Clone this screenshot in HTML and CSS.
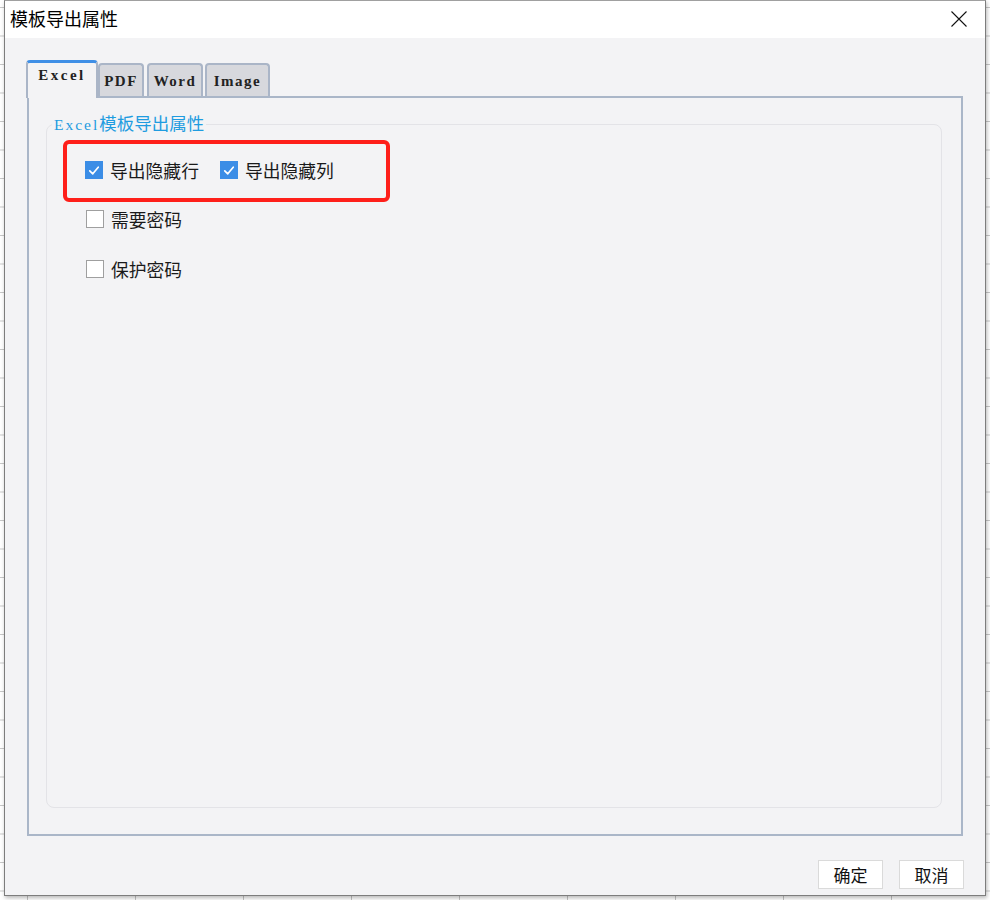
FILE: index.html
```html
<!DOCTYPE html>
<html lang="zh-CN">
<head>
<meta charset="utf-8">
<title>模板导出属性</title>
<link rel="stylesheet" href="styles.css">
</head>
<body>
<div class="dialog">
  <div class="titlebar">
    <span class="title">模板导出属性</span>
    <span class="close">
      <svg width="16" height="16" viewBox="0 0 16 16"><path d="M0.5 0.5 L15.5 15.5 M15.5 0.5 L0.5 15.5" stroke="#111" stroke-width="1.1" fill="none"/></svg>
    </span>
  </div>
  <div class="body">
    <div class="tabs">
      <div class="tab tab-excel active">Excel</div>
      <div class="tab tab-pdf">PDF</div>
      <div class="tab tab-word">Word</div>
      <div class="tab tab-image">Image</div>
    </div>
    <div class="panel">
      <fieldset class="group">
        <legend class="legend"><span class="latin">Excel</span>模板导出属性</legend>
        <div class="highlight">
          <label class="check"><span class="box checked"><svg width="17" height="17" viewBox="0 0 17 17"><path d="M4 8.8 L7.2 12 L13 5" stroke="#fff" stroke-width="1.8" fill="none" stroke-linecap="round" stroke-linejoin="round"/></svg></span>导出隐藏行</label>
          <label class="check"><span class="box checked"><svg width="17" height="17" viewBox="0 0 17 17"><path d="M4 8.8 L7.2 12 L13 5" stroke="#fff" stroke-width="1.8" fill="none" stroke-linecap="round" stroke-linejoin="round"/></svg></span>导出隐藏列</label>
        </div>
        <div class="row row-2"><label class="check"><span class="box"></span>需要密码</label></div>
        <div class="row row-3"><label class="check"><span class="box"></span>保护密码</label></div>
      </fieldset>
    </div>
    <div class="buttons">
      <button class="btn">确定</button>
      <button class="btn">取消</button>
    </div>
  </div>
</div>
</body>
</html>
```
FILE: styles.css
```css
html, body {
  margin: 0;
  padding: 0;
}
body {
  width: 990px;
  height: 900px;
  overflow: hidden;
  background-color: #ffffff;
  background-image:
    linear-gradient(to right, #c4c4c4 1px, transparent 1px),
    linear-gradient(to bottom, #c8c8c8 1px, transparent 1px);
  background-size: 108px 28.5px, 108px 28.5px;
  background-position: 27px 0, 0 7px;
  font-family: "Noto Sans CJK SC", "Noto Sans", sans-serif;
  color: #1a1a1a;
}
.dialog {
  margin-left: 4px;
  width: 980px;
  height: 894px;
  border: 1px solid #7d7d7d;
  border-top-color: #a0a0a0;
  background: #f3f3f5;
  box-shadow: 1px 2px 4px rgba(0, 0, 0, 0.28);
  display: flex;
  flex-direction: column;
}
.titlebar {
  height: 37px;
  background: #ffffff;
  display: flex;
  align-items: center;
  justify-content: space-between;
  padding: 0 18px 0 5px;
}
.title {
  font-size: 18px;
  line-height: 37px;
  color: #000;
  margin-top: -2px;
}
.close {
  display: flex;
  margin-top: -1px;
}
.body {
  flex: 1;
  padding: 22px 22px 0 22px;
  display: flex;
  flex-direction: column;
}
.tabs {
  display: flex;
  align-items: flex-end;
  height: 38px;
  margin-bottom: -2px;
  position: relative;
  z-index: 1;
}
.tab {
  box-sizing: border-box;
  height: 33px;
  background: #d7d8dd;
  border: 2px solid #aab5c7;
  border-bottom: none;
  border-radius: 4px 4px 0 0;
  font-family: "Liberation Serif", "DejaVu Serif", serif;
  font-weight: bold;
  font-size: 15px;
  letter-spacing: 1.5px;
  color: #222;
  display: flex;
  justify-content: center;
  align-items: center;
  padding-top: 2px;
  margin-bottom: 2px;
}
.tab.active {
  height: 38px;
  margin-bottom: 0;
  background: #f3f3f5;
  border-top: 3px solid #3f8fe6;
  align-items: flex-start;
  padding-top: 4px;
  margin-left: -1px;
  letter-spacing: 2.5px;
}
.tab-excel { width: 72px; }
.tab-pdf { width: 46px; }
.tab-word { width: 56px; margin-left: 3px; }
.tab-image { width: 65px; margin-left: 2px; }
.panel {
  box-sizing: border-box;
  height: 740px;
  border: 2px solid #aab6c8;
  background: #f3f3f5;
  padding: 14px 19px 26px 17px;
  display: flex;
  flex-direction: column;
}
.group {
  flex: 1;
  margin: 0;
  min-width: 0;
  border: 1px solid #e3e3e7;
  border-radius: 8px;
  padding: 0 0 0 16px;
}
.legend {
  padding: 0 2px 0 2px;
  margin-left: -11px;
  color: #1f9ce0;
  font-size: 17.5px;
  line-height: 22px;
}
.latin {
  font-family: "Liberation Serif", "DejaVu Serif", serif;
  font-size: 15.5px;
  letter-spacing: 2px;
}
.highlight {
  box-sizing: border-box;
  width: 327px;
  height: 62px;
  margin-top: 4px;
  border: 4px solid #fe1f1a;
  border-radius: 6px;
  padding-left: 18px;
  padding-bottom: 2px;
  display: flex;
  align-items: center;
  gap: 21px;
}
.row {
  height: 30px;
  display: flex;
  align-items: center;
  padding-left: 23px;
}
.row-2 { margin-top: 2px; }
.row-3 { margin-top: 20px; }
.check {
  display: flex;
  align-items: center;
  gap: 7px;
  font-size: 17.8px;
  line-height: 24px;
  color: #1a1a1a;
}
.box {
  box-sizing: border-box;
  width: 18px;
  height: 18px;
  background: #ffffff;
  border: 1px solid #9f9f9f;
  display: flex;
  align-items: center;
  justify-content: center;
}
.box.checked {
  background: #3b8de6;
  border-color: #3b8de6;
}
.buttons {
  display: flex;
  justify-content: flex-end;
  gap: 16px;
  margin-top: 24px;
  margin-right: -1px;
}
.btn {
  box-sizing: border-box;
  width: 65px;
  height: 29px;
  background: #ffffff;
  border: 1px solid #dadada;
  border-radius: 0;
  font-family: "Noto Sans CJK SC", sans-serif;
  font-size: 17px;
  color: #111;
  padding: 0;
  line-height: 27px;
}
```
